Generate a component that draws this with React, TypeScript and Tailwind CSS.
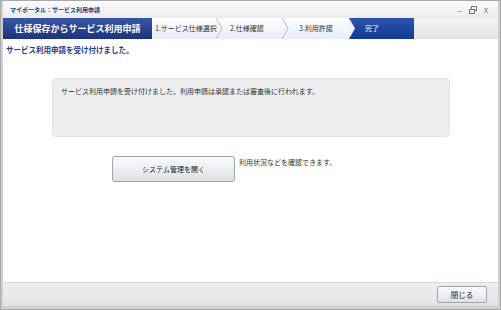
const jp = { fontFamily: '"Noto Sans CJK JP", "Noto Sans", sans-serif' };

function Chevron() {
  return (
    <svg width="10" height="21" viewBox="0 0 10 21" className="shrink-0">
      <path d="M2 0 L8 10.5 L2 21" fill="none" stroke="#b8bcc6" strokeWidth="1" />
    </svg>
  );
}

export default function App() {
  return (
    <div className="w-[501px] h-[310px] bg-[#a9a9a9] p-[1px] overflow-hidden" style={jp}>
      <div className="flex h-full flex-col border-x-2 border-b-[3px] border-[#cfcfcf] bg-white">
        {/* title bar */}
        <div className="flex h-[17px] items-center justify-between bg-gradient-to-b from-[#fbfbfb] to-[#ececec] pl-[7px] pr-[10px]">
          <span className="whitespace-nowrap text-[6px] font-bold leading-none text-[#213f86]">マイポータル：サービス利用申請</span>
          <div className="flex items-center gap-[7px] text-[9px] leading-none text-[#777]">
            <span className="-mt-[4px]">_</span>
            <svg width="8" height="8" viewBox="0 0 8 8">
              <rect x="2.5" y="0.5" width="5" height="4" fill="none" stroke="#777" />
              <rect x="0.5" y="3.5" width="5" height="4" fill="#eee" stroke="#777" />
            </svg>
            <span className="text-[8px]">x</span>
          </div>
        </div>

        {/* wizard header */}
        <div className="flex h-[21px] items-stretch bg-gradient-to-b from-[#f4f4f4] to-[#e4e4e4]">
          <div className="flex w-[149px] items-center justify-center whitespace-nowrap bg-gradient-to-b from-[#3a56a6] to-[#1b3479] text-[9px] font-bold text-white">
            仕様保存からサービス利用申請
          </div>
          <div className="flex items-stretch whitespace-nowrap bg-gradient-to-b from-[#ffffff] to-[#e7ecf6] text-[7px] text-[#333]">
            <div className="flex w-[62px] items-center pl-[3px]">1.サービス仕様選択</div>
            <Chevron />
            <div className="flex w-[56px] items-center pl-[6px]">2.仕様確認</div>
            <Chevron />
            <div className="flex w-[58px] items-center pl-[9px]">3.利用許諾</div>
          </div>
          <div className="relative flex w-[66px] items-center bg-gradient-to-b from-[#2d55b0] to-[#123a8f] pl-[17px] text-[7px] text-white">
            <svg width="8" height="21" viewBox="0 0 8 21" className="absolute left-0 top-0">
              <path d="M0 0 L1 0 L7 10.5 L1 21 L0 21 Z" fill="#eef1f8" />
            </svg>
            完了
          </div>
          <div className="flex-1" />
        </div>

        {/* body */}
        <div className="flex-1 bg-white">
          <div className="pl-[3px] pt-[5px] text-[7.5px] font-bold text-[#1d3d8c]">サービス利用申請を受け付けました。</div>
          <div className="ml-[49px] mt-[23px] h-[59px] w-[398px] rounded-[4px] border border-[#e2e2e2] bg-[#eeeeee] px-[8px] pt-[7px] text-[7px] text-[#333]">
            サービス利用申請を受け付けました。利用申請は承認または審査後に行われます。
          </div>
          <div className="ml-[109px] mt-[19px] flex items-start gap-[4px]">
            <button className="h-[26px] w-[123px] rounded-[3px] border border-[#9ea3ad] bg-gradient-to-b from-[#fbfbfc] to-[#dde1e8] text-[7px] text-[#222]">
              システム管理を開く
            </button>
            <span className="pt-[1px] text-[7px] text-[#333]">利用状況などを確認できます。</span>
          </div>
        </div>

        {/* footer */}
        <div className="flex h-[24px] items-center justify-end border-t border-[#dadada] bg-gradient-to-b from-[#efefef] to-[#e2e2e2] pr-[11px]">
          <button className="h-[17px] w-[50px] rounded-[2px] border border-[#9ea3ad] bg-gradient-to-b from-[#fbfbfc] to-[#dde1e8] text-[7.5px] text-[#222]">
            閉じる
          </button>
        </div>
      </div>
    </div>
  );
}
